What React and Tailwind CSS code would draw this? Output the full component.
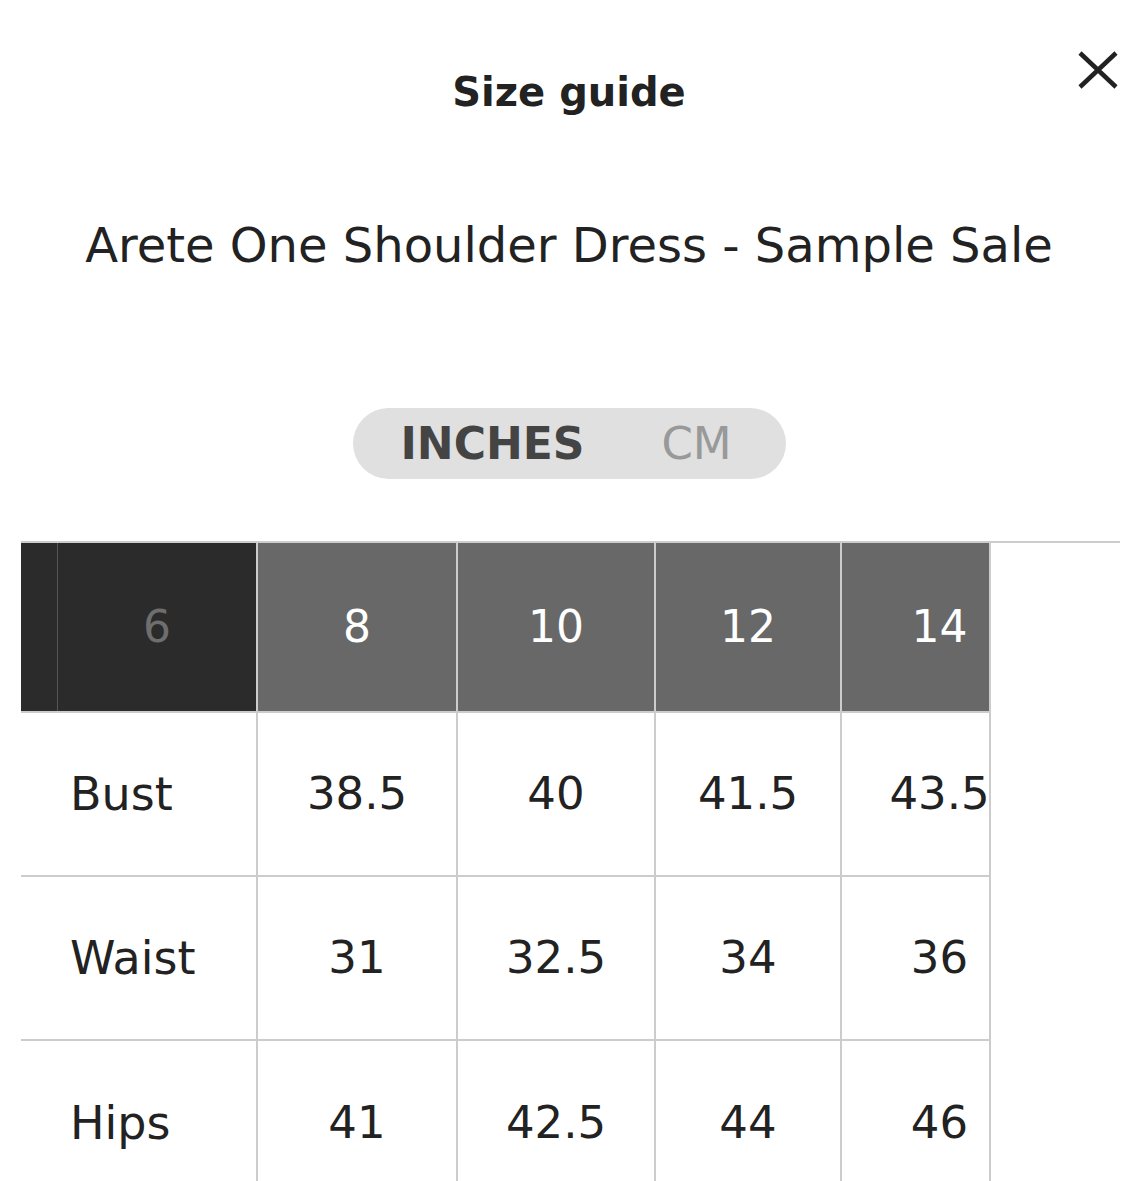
import React from 'react';

const sizes = ['8', '10', '12', '14'];
const rows = [
	{ label: 'Bust', values: ['38.5', '40', '41.5', '43.5'] },
	{ label: 'Waist', values: ['31', '32.5', '34', '36'] },
	{ label: 'Hips', values: ['41', '42.5', '44', '46'] },
];

const colW = ['w-[200px]', 'w-[198px]', 'w-[186px]', 'w-[149px]'];
const innerW = ['w-[198px]', 'w-[196px]', 'w-[184px]', 'w-[195px]'];

function CloseIcon() {
	return (
		<svg width="44" height="44" viewBox="0 0 44 44" fill="none" stroke="#222" strokeWidth="4.5">
			<path d="M4 5 L40 39 M40 5 L4 39" />
		</svg>
	);
}

export default function App() {
	return (
		<div
			className="relative w-[1138px] h-[1181px] overflow-hidden bg-white text-[#222]"
			style={{ fontFamily: '"DejaVu Sans", "Liberation Sans", sans-serif' }}
		>
			<button className="absolute left-[1076px] top-[48px]">
				<CloseIcon />
			</button>

			<h2 className="pt-[66px] text-center text-[40px] leading-[52px] font-bold">Size guide</h2>

			<p className="mt-[97px] text-center text-[48px] leading-[60px]">
				Arete One Shoulder Dress - Sample Sale
			</p>

			<div className="mt-[133px] flex justify-center">
				<div className="flex h-[71px] w-[433px] items-center rounded-full bg-[#e0e0e0] pl-[20px]">
					<span className="w-[240px] text-center text-[44px] font-bold text-[#444]">INCHES</span>
					<span className="w-[168px] text-center text-[45px] text-[#999]">CM</span>
				</div>
			</div>

			<div className="mt-[62px] ml-[21px] h-[2px] w-[1099px] bg-[#ccc]" />
			<div className="ml-[21px] w-[970px]">
				<div className="flex h-[170px] border-b-2 border-[#ccc]">
					<div className="w-[37px] bg-[#2b2b2b] border-r border-[#555]" />
					<div className="flex w-[198px] items-center justify-center bg-[#2b2b2b] text-[44px] text-[#6e6e6e]">
						6
					</div>
					{sizes.map((s, i) => (
						<div
							key={s}
							className={`${colW[i]} overflow-hidden border-l-2 border-[#ccc] bg-[#686868]`}
						>
							<div className={`${innerW[i]} flex h-full items-center justify-center text-[44px] text-white`}>
								{s}
							</div>
						</div>
					))}
					<div className="w-[2px] bg-[#ccc]" />
				</div>

				{rows.map((r, ri) => (
					<div
						key={r.label}
						className={`flex h-[164px] ${ri < rows.length - 1 ? 'border-b-2 border-[#ccc]' : ''}`}
					>
						<div className="flex w-[235px] items-center pl-[49px] text-[46px]">{r.label}</div>
						{r.values.map((v, i) => (
							<div key={i} className={`${colW[i]} overflow-hidden border-l-2 border-[#ccc]`}>
								<div className={`${innerW[i]} flex h-full items-center justify-center text-[45px]`}>
									{v}
								</div>
							</div>
						))}
						<div className="w-[2px] bg-[#ccc]" />
					</div>
				))}
			</div>
		</div>
	);
}
